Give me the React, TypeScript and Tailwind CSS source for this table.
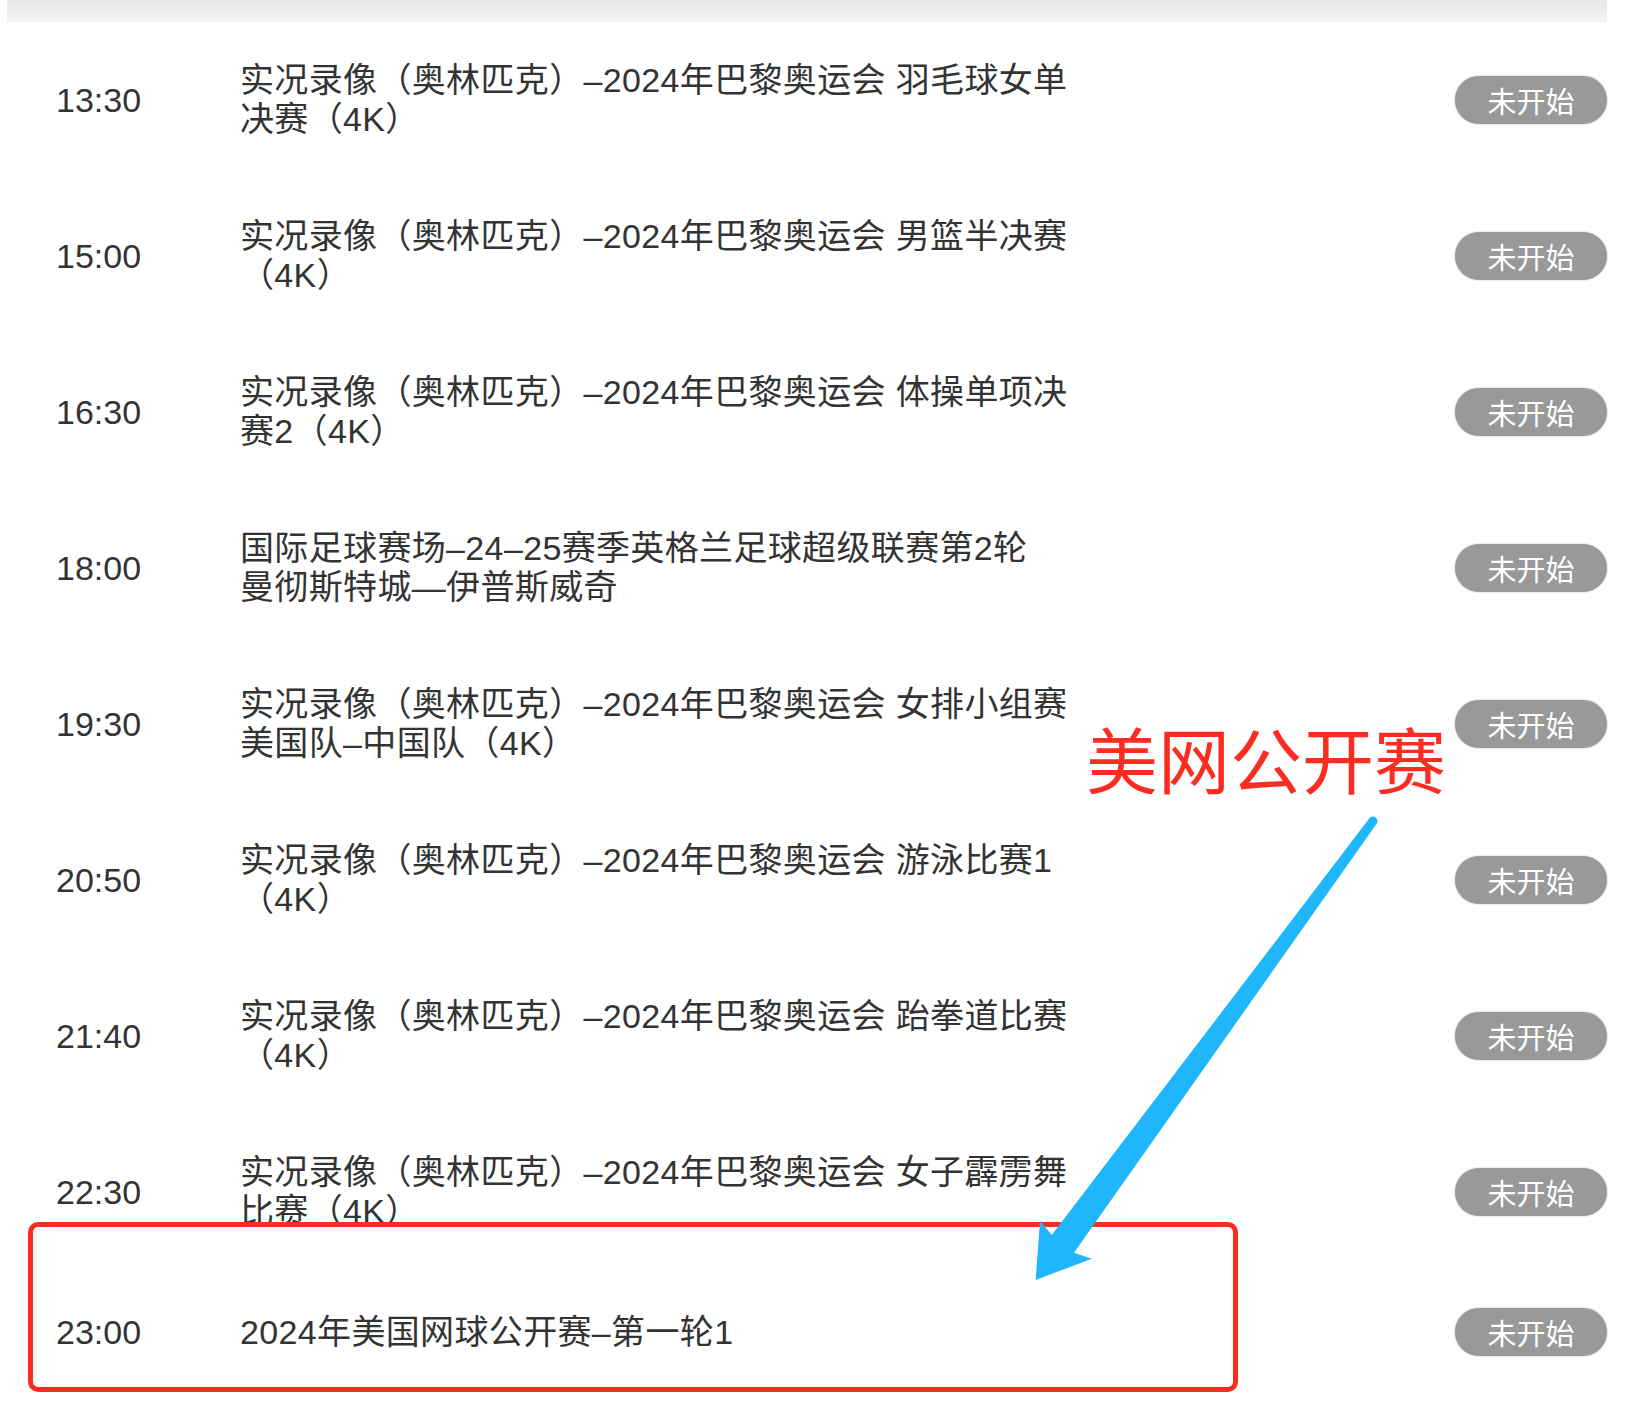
const rows: { time: string; lines: string[] }[] = [
  { time: "13:30", lines: ["实况录像（奥林匹克）–2024年巴黎奥运会 羽毛球女单", "决赛（4K）"] },
  { time: "15:00", lines: ["实况录像（奥林匹克）–2024年巴黎奥运会 男篮半决赛", "（4K）"] },
  { time: "16:30", lines: ["实况录像（奥林匹克）–2024年巴黎奥运会 体操单项决", "赛2（4K）"] },
  { time: "18:00", lines: ["国际足球赛场–24–25赛季英格兰足球超级联赛第2轮", "曼彻斯特城—伊普斯威奇"] },
  { time: "19:30", lines: ["实况录像（奥林匹克）–2024年巴黎奥运会 女排小组赛", "美国队–中国队（4K）"] },
  { time: "20:50", lines: ["实况录像（奥林匹克）–2024年巴黎奥运会 游泳比赛1", "（4K）"] },
  { time: "21:40", lines: ["实况录像（奥林匹克）–2024年巴黎奥运会 跆拳道比赛", "（4K）"] },
  { time: "22:30", lines: ["实况录像（奥林匹克）–2024年巴黎奥运会 女子霹雳舞", "比赛（4K）"] },
];

function StatusBadge() {
  return (
    <div className="w-[152px] h-[48px] rounded-full bg-[#999999] shadow-[0_0_2px_rgba(0,0,0,0.3)] flex items-center justify-center text-white text-[29px] leading-none font-['Noto_Sans_CJK_SC',sans-serif]">
      未开始
    </div>
  );
}

function Row({ time, lines }: { time: string; lines: string[] }) {
  return (
    <div className="h-[156px] flex items-center pl-[56px] pr-[35px]">
      <div className="w-[184px] shrink-0 text-[34px] leading-[39px]">{time}</div>
      <div className="flex-1 text-[34px] leading-[39px] tracking-[0.35px]">
        {lines.map((l) => (
          <div key={l} className="whitespace-nowrap">
            {l}
          </div>
        ))}
      </div>
      <StatusBadge />
    </div>
  );
}

export default function App() {
  return (
    <div className="relative w-[1642px] min-h-[1410px] bg-white text-[#333333] font-['Liberation_Sans','Noto_Sans_CJK_SC',sans-serif]">
      {/* top strip */}
      <div className="ml-[7px] w-[1600px] h-[22px] bg-gradient-to-b from-[#e8e8e8] to-[#f2f2f2]" />

      {rows.map((r) => (
        <Row key={r.time} time={r.time} lines={r.lines} />
      ))}

      {/* highlighted row */}
      <div className="relative z-10 h-[124px] flex items-center pl-[56px] pr-[35px]">
        <div className="absolute -z-10 left-[28px] top-[-48px] w-[1210px] h-[170px] border-[5px] border-[#fb2d21] rounded-[10px] bg-white" />
        <div className="w-[184px] shrink-0 text-[34px] leading-[39px]">23:00</div>
        <div className="flex-1 text-[34px] leading-[39px] tracking-[0.35px] whitespace-nowrap">2024年美国网球公开赛–第一轮1</div>
        <StatusBadge />
      </div>

      {/* annotation */}
      <div className="absolute z-20 left-[1086px] top-[721px] text-[72px] leading-none text-[#fc2c20] font-['Noto_Sans_CJK_SC',sans-serif]">
        美网公开赛
      </div>
      <svg className="absolute z-20 inset-0 pointer-events-none" width="1642" height="1410" viewBox="0 0 1642 1410">
        <path
          d="M1369.4 818.3 A4.5 4.5 0 0 1 1376.6 823.7 L1074 1252.7 L1091.7 1258.7 L1035.7 1280 L1040 1220.7 L1051.7 1235 Z"
          fill="#1fb6fb"
        />
      </svg>
    </div>
  );
}
